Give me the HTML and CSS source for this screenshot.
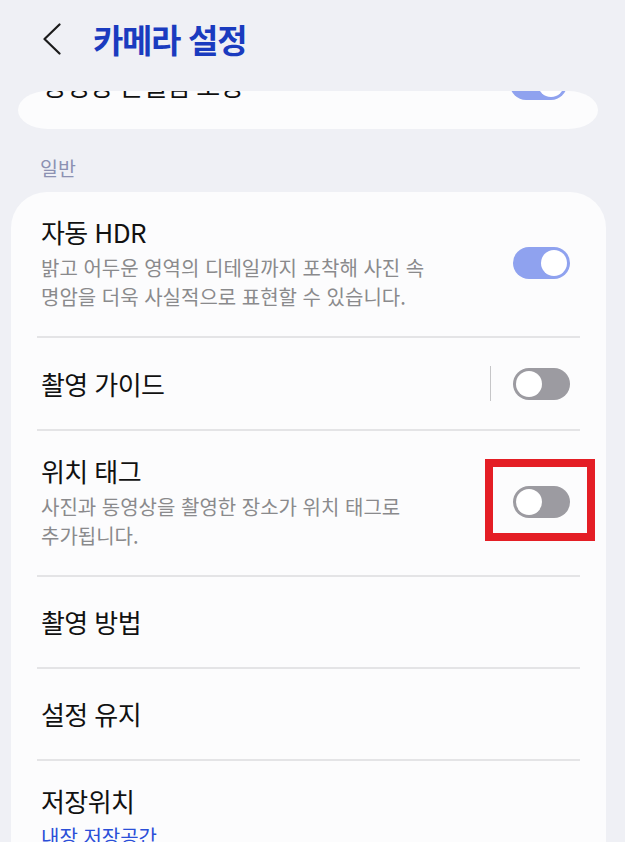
FILE: index.html
```html
<!DOCTYPE html>
<html lang="ko">
<head>
<meta charset="utf-8">
<title>카메라 설정</title>
<link rel="stylesheet" href="styles.css">
</head>
<body>
<header class="header">
  <svg class="back" width="20" height="32" viewBox="0 0 20 32" aria-hidden="true">
    <path d="M17.5 1.5 L2.5 16 L17.5 30.5" fill="none" stroke="#1b1b1b" stroke-width="2.2" stroke-linecap="round" stroke-linejoin="round"/>
  </svg>
  <h1 class="title">카메라 설정</h1>
</header>

<main class="scroll">
  <div class="peek">
    <div class="peek-row">
      <span class="row-title">동영상 손떨림 보정</span>
      <span class="toggle on"><span class="knob"></span></span>
    </div>
  </div>

  <div class="section-label">일반</div>

  <section class="card">
    <div class="row">
      <div class="text">
        <div class="row-title">자동 HDR</div>
        <div class="row-sub">밝고 어두운 영역의 디테일까지 포착해 사진 속<br>명암을 더욱 사실적으로 표현할 수 있습니다.</div>
      </div>
      <span class="toggle on"><span class="knob"></span></span>
    </div>

    <div class="row single">
      <div class="text">
        <div class="row-title">촬영 가이드</div>
      </div>
      <span class="vsep"></span>
      <span class="toggle off"><span class="knob"></span></span>
    </div>

    <div class="row marked">
      <div class="text">
        <div class="row-title">위치 태그</div>
        <div class="row-sub">사진과 동영상을 촬영한 장소가 위치 태그로<br>추가됩니다.</div>
      </div>
      <span class="toggle off"><span class="knob"></span></span>
      <span class="highlight"></span>
    </div>

    <div class="row single">
      <div class="text">
        <div class="row-title">촬영 방법</div>
      </div>
    </div>

    <div class="row single">
      <div class="text">
        <div class="row-title">설정 유지</div>
      </div>
    </div>

    <div class="row">
      <div class="text">
        <div class="row-title">저장위치</div>
        <div class="row-sub blue">내장 저장공간</div>
      </div>
    </div>
  </section>
</main>
</body>
</html>
```

FILE: styles.css
```css
html, body {
  margin: 0;
  padding: 0;
}

body {
  background: #eff0f5;
  font-family: "Noto Sans CJK KR", "Noto Sans", sans-serif;
  color: #111111;
  width: 625px;
  height: 842px;
  overflow: hidden;
}

.header {
  display: flex;
  align-items: center;
  height: 78px;
  padding-left: 42px;
}

.back {
  display: block;
  flex: none;
}

.title {
  margin: 0 0 0 31px;
  font-size: 33px;
  font-weight: 700;
  letter-spacing: -1.3px;
  color: #1a3bbf;
  line-height: 40px;
}

.scroll {
  margin-top: 13px;
}

.peek {
  height: 38px;
  margin: 0 27px 0 18px;
  background: #fcfcfd;
  border-radius: 30px / 19px;
  overflow: hidden;
}

.peek-row {
  display: flex;
  align-items: flex-start;
  justify-content: space-between;
  margin-top: -23px;
  padding: 0 31px 0 25px;
}

.peek-row .row-title {
  line-height: 34px;
}

.peek-row .toggle {
  margin-top: 0;
}

.section-label {
  margin: 26px 0 11px 40px;
  font-size: 19.5px;
  line-height: 26px;
  color: #8c91b2;
}

.card {
  margin: 0 19px 0 11px;
  background: #fcfcfd;
  border-radius: 36px 36px 0 0;
  padding-bottom: 40px;
}

.row {
  position: relative;
  display: flex;
  align-items: center;
  margin: 0 26px;
  padding: 23px 10px 25px 4px;
}

.row + .row {
  border-top: 2px solid #e4e4e6;
}

.row.single {
  padding-top: 28px;
  padding-bottom: 28px;
}

.text {
  flex: 1;
  min-width: 0;
}

.row-title {
  font-size: 26px;
  line-height: 34px;
  letter-spacing: -0.6px;
  color: #111111;
  white-space: nowrap;
}

.row-sub {
  margin-top: 4px;
  font-size: 20px;
  line-height: 29px;
  color: #8a8a8c;
  white-space: nowrap;
}

.row-sub.blue {
  color: #2b4fd8;
}

.vsep {
  flex: none;
  width: 1.5px;
  height: 35px;
  background: #c6c6c8;
  margin-right: 22px;
}

.toggle {
  flex: none;
  position: relative;
  display: inline-flex;
  align-items: center;
  width: 57px;
  height: 32px;
  border-radius: 16px;
  box-sizing: border-box;
  padding: 0 3px;
}

.toggle.on {
  background: #8fa2ef;
  justify-content: flex-end;
}

.toggle.off {
  background: #9c9ba1;
  justify-content: flex-start;
}

.knob {
  width: 26px;
  height: 26px;
  border-radius: 50%;
  background: #ffffff;
}

.highlight {
  position: absolute;
  top: 28px;
  right: -15px;
  width: 110px;
  height: 82px;
  box-sizing: border-box;
  border: 8px solid #e41e25;
}
```
